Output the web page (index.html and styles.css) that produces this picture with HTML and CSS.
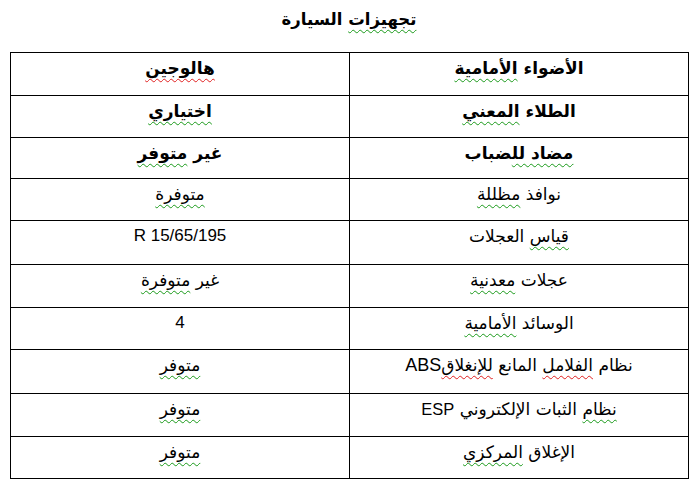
FILE: index.html
```html
<!DOCTYPE html>
<html lang="ar" dir="rtl">
<head>
<meta charset="utf-8">
<title>تجهيزات السيارة</title>
<link rel="stylesheet" href="styles.css">
</head>
<body>
<div class="page">
  <h1 class="title"><span class="sq-g">تجهيزات</span> السيارة</h1>
  <table class="specs">
    <tbody>
      <tr class="bold h43">
        <td>الأضواء <span class="sq-g">الأمامية</span></td>
        <td><span class="sq-r">هالوجين</span></td>
      </tr>
      <tr class="bold h42">
        <td>الطلاء <span class="sq-g">المعني</span></td>
        <td><span class="sq-g">اختياري</span></td>
      </tr>
      <tr class="bold h41">
        <td><span class="sq-g">مضاد لل</span>ضباب</td>
        <td>غير <span class="sq-g">متوفر</span></td>
      </tr>
      <tr class="h42">
        <td>نوافذ <span class="sq-g">مظللة</span></td>
        <td><span class="sq-g">متوفرة</span></td>
      </tr>
      <tr class="h44">
        <td><span class="sq-g">قياس</span> العجلات</td>
        <td class="latin">R 15/65/195</td>
      </tr>
      <tr class="h43">
        <td>عجلات <span class="sq-g">معدنية</span></td>
        <td>غير <span class="sq-g">متوفرة</span></td>
      </tr>
      <tr class="h42">
        <td>الوسائد <span class="sq-g">الأمامية</span></td>
        <td class="arial">4</td>
      </tr>
      <tr class="h44">
        <td>نظام <span class="sq-r">الفلامل</span> المانع <span class="sq-r">للإنغلاق</span><span class="arial">ABS</span></td>
        <td><span class="sq-g">متوفر</span></td>
      </tr>
      <tr class="h43">
        <td><span class="sq-g">نظام</span> الثبات الإلكتروني <span class="latin esp">ESP</span></td>
        <td><span class="sq-g">متوفر</span></td>
      </tr>
      <tr class="h42">
        <td>الإغلاق <span class="sq-g">المركزي</span></td>
        <td><span class="sq-g">متوفر</span></td>
      </tr>
    </tbody>
  </table>
</div>
</body>
</html>
```
FILE: styles.css
```css
html, body {
  margin: 0;
  padding: 0;
  background: #ffffff;
}

body {
  font-family: "DejaVu Sans", "Liberation Sans", sans-serif;
  color: #000000;
}

.page {
  width: 698px;
  height: 486px;
  overflow: hidden;
}

.title {
  margin: 0;
  padding-top: 8px;
  height: 52px;
  box-sizing: border-box;
  text-align: center;
  font-size: 16.5px;
  font-weight: bold;
  line-height: 24px;
}

.specs {
  margin-right: 9px;
  width: 679px;
  border-collapse: collapse;
  table-layout: fixed;
}

.specs td {
  border: 1px solid #000000;
  padding: 3px 0 0 0;
  box-sizing: border-box;
  vertical-align: top;
  text-align: center;
  font-size: 17px;
  line-height: 24px;
}

.specs tr.h41 td { height: 41px; }
.specs tr.h42 td { height: 42px; }
.specs tr.h43 td { height: 43px; }
.specs tr.h44 td { height: 44px; }

.specs tr.bold td {
  font-weight: bold;
}

.latin {
  font-family: "Liberation Sans", Arial, sans-serif;
  font-size: 18.5px;
}

.esp {
  font-size: 16.5px;
}

.arial {
  font-family: "Liberation Sans", Arial, sans-serif;
  font-size: 18px;
}

.sq-g {
  text-decoration: underline wavy #1a9a1a;
  text-decoration-thickness: 1px;
  text-underline-offset: 4px;
}

.sq-r {
  text-decoration: underline wavy #e02020;
  text-decoration-thickness: 1px;
  text-underline-offset: 4px;
}
```
